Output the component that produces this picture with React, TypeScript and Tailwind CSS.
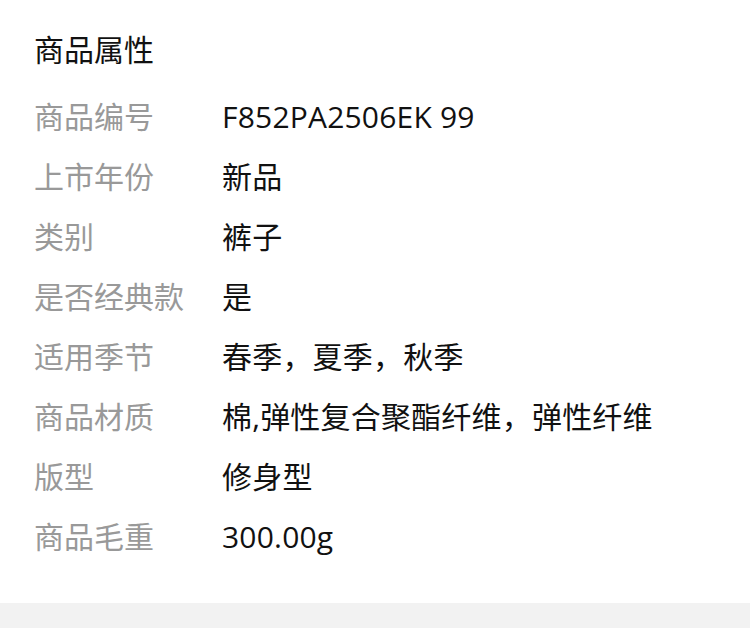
import React from "react";

const rows: { label: string; value: string }[] = [
  { label: "商品编号", value: "F852PA2506EK 99" },
  { label: "上市年份", value: "新品" },
  { label: "类别", value: "裤子" },
  { label: "是否经典款", value: "是" },
  { label: "适用季节", value: "春季，夏季，秋季" },
  { label: "商品材质", value: "棉,弹性复合聚酯纤维，弹性纤维" },
  { label: "版型", value: "修身型" },
  { label: "商品毛重", value: "300.00g" },
];

export default function App() {
  return (
    <div
      className="w-[750px] h-[628px] bg-white flex flex-col overflow-hidden"
      style={{ fontFamily: '"Open Sans", "Noto Sans CJK SC", sans-serif' }}
    >
      <div className="px-[34px] pt-[20px] flex-1">
        <h2 className="text-[30px] leading-[60px] text-[#111] font-normal">商品属性</h2>
        <div className="mt-[6px]">
          {rows.map((r) => (
            <div key={r.label} className="flex h-[60px] items-center text-[30px]">
              <div className="w-[188px] text-[#999]">{r.label}</div>
              <div className="text-[#111] tracking-[0.2px]">{r.value}</div>
            </div>
          ))}
        </div>
      </div>
      <div className="h-[25px] bg-[#f2f2f2]" />
    </div>
  );
}
